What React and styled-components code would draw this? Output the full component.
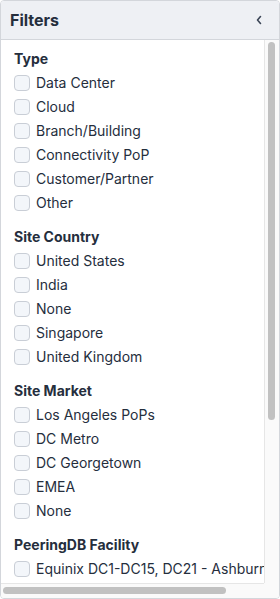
import styled, { createGlobalStyle } from "styled-components";

const Global = createGlobalStyle`
  html, body {
    margin: 0;
    padding: 0;
    background: #ffffff;
  }
  * {
    box-sizing: border-box;
  }
`;

// 전체 필터 패널
const Panel = styled.div`
  width: 280px;
  height: 599px;
  border: 1px solid #d3d6db;
  border-radius: 4px;
  overflow: hidden;
  display: flex;
  flex-direction: column;
  font-family: Inter, "Liberation Sans", sans-serif;
  color: #252e3d;
  background: #ffffff;
`;

const Header = styled.div`
  height: 39px;
  flex: none;
  display: flex;
  align-items: center;
  justify-content: space-between;
  padding: 0 14px 0 9px;
  background: #eef0f4;
  border-bottom: 1px solid #d3d6db;
`;

const Title = styled.h2`
  margin: 0;
  font-size: 16px;
  font-weight: 700;
  color: #252e3d;
`;

const Collapse = styled.button`
  border: 0;
  background: none;
  padding: 0;
  width: 12px;
  height: 12px;
  display: flex;
  align-items: center;
  justify-content: center;
  color: #3b4556;
  cursor: pointer;
`;

// 스크롤 영역 (뷰포트 + 스크롤바)
const Body = styled.div`
  flex: 1;
  min-height: 0;
  display: grid;
  grid-template-columns: 1fr 15px;
  grid-template-rows: 1fr 15px;
`;

const Viewport = styled.div`
  overflow: hidden;
  padding: 7px 0 0 13px;
`;

const Track = styled.div`
  background: #fafafa;
  display: flex;
  flex-direction: ${(p) => (p.$horizontal ? "row" : "column")};
  padding: ${(p) => (p.$horizontal ? "3px 0 0 2px" : "2px 0 0 3px")};
  border-left: ${(p) => (p.$horizontal ? "0" : "1px solid #e6e6e6")};
  border-top: ${(p) => (p.$horizontal ? "1px solid #e6e6e6" : "0")};
`;

const Thumb = styled.div`
  background: #c1c1c1;
  border-radius: 4px;
  width: ${(p) => (p.$horizontal ? `${p.$size}px` : "7px")};
  height: ${(p) => (p.$horizontal ? "7px" : `${p.$size}px`)};
`;

const Corner = styled.div`
  background: #fafafa;
`;

const Section = styled.div`
  margin-bottom: 10px;
`;

const Heading = styled.div`
  font-size: 14px;
  font-weight: 700;
  line-height: 24px;
  white-space: nowrap;
`;

const Row = styled.label`
  display: flex;
  align-items: center;
  gap: 6px;
  height: 24px;
  font-size: 14px;
  line-height: 22px;
  white-space: nowrap;
  cursor: pointer;
`;

const Box = styled.span`
  flex: none;
  width: 16px;
  height: 16px;
  border: 1px solid #c9ced6;
  border-radius: 4px;
  background: #f3f6fa;
`;

const sections = [
  { title: "Type", items: ["Data Center", "Cloud", "Branch/Building", "Connectivity PoP", "Customer/Partner", "Other"] },
  { title: "Site Country", items: ["United States", "India", "None", "Singapore", "United Kingdom"] },
  { title: "Site Market", items: ["Los Angeles PoPs", "DC Metro", "DC Georgetown", "EMEA", "None"] },
  { title: "PeeringDB Facility", items: ["Equinix DC1-DC15, DC21 - Ashburn, VA"] },
];

const App = () => {
  return (
    <>
      <Global />
      <Panel>
        <Header>
          <Title>Filters</Title>
          <Collapse aria-label="collapse">
            <svg width="8" height="10" viewBox="0 0 8 10" fill="none">
              <path d="M5.5 1.5 L2.5 5 L5.5 8.5" stroke="currentColor" strokeWidth="1.6" strokeLinecap="round" strokeLinejoin="round" />
            </svg>
          </Collapse>
        </Header>
        <Body>
          <Viewport>
            {sections.map((s) => (
              <Section key={s.title}>
                <Heading>{s.title}</Heading>
                {s.items.map((it) => (
                  <Row key={it}>
                    <Box />
                    {it}
                  </Row>
                ))}
              </Section>
            ))}
          </Viewport>
          <Track>
            <Thumb $size={378} />
          </Track>
          <Track $horizontal>
            <Thumb $horizontal $size={223} />
          </Track>
          <Corner />
        </Body>
      </Panel>
    </>
  );
};

export default App;
